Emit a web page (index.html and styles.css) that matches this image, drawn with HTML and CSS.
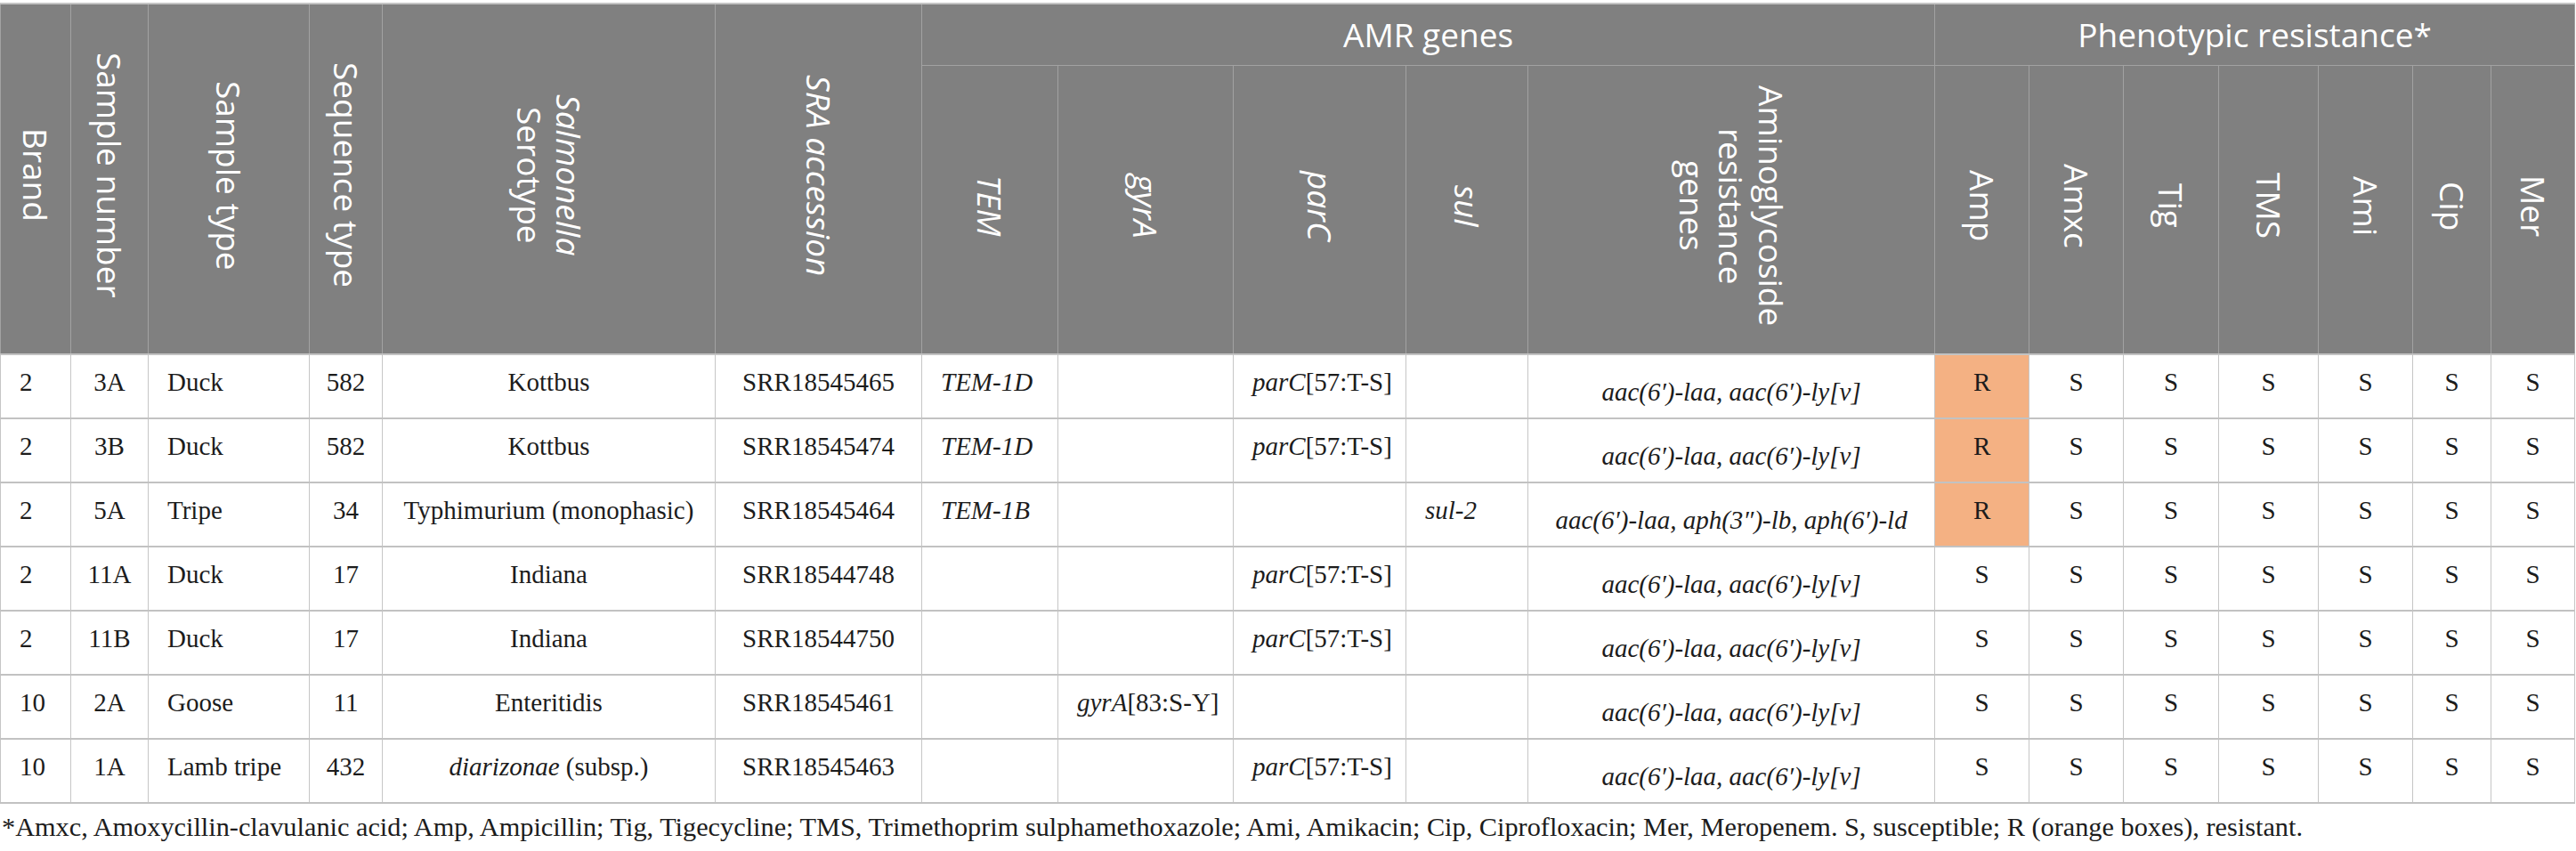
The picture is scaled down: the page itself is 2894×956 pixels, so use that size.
FILE: index.html
```html
<!DOCTYPE html>
<html>
<head>
<meta charset="utf-8">
<link rel="stylesheet" href="styles.css">
</head>
<body>
<div class="wrap">
<table class="t">
<colgroup>
<col style="width:79px"><col style="width:87px"><col style="width:181px"><col style="width:82px"><col style="width:374px"><col style="width:232px"><col style="width:153px"><col style="width:197px"><col style="width:194px"><col style="width:137px"><col style="width:457px"><col style="width:106px"><col style="width:106px"><col style="width:107px"><col style="width:112px"><col style="width:106px"><col style="width:88px"><col style="width:94px">
</colgroup>
<thead>
<tr class="grp">
<th rowspan="2"><span class="vt">Brand</span></th>
<th rowspan="2"><span class="vt">Sample number</span></th>
<th rowspan="2"><span class="vt">Sample type</span></th>
<th rowspan="2"><span class="vt">Sequence type</span></th>
<th rowspan="2"><span class="vt"><i>Salmonella</i><br>Serotype</span></th>
<th rowspan="2"><span class="vt"><i>SRA accession</i></span></th>
<th colspan="5" class="gh">AMR genes</th>
<th colspan="7" class="gh">Phenotypic resistance*</th>
</tr>
<tr class="sub">
<th><span class="vt"><i>TEM</i></span></th>
<th><span class="vt"><i>gyrA</i></span></th>
<th><span class="vt"><i>parC</i></span></th>
<th><span class="vt"><i>sul</i></span></th>
<th><span class="vt">Aminoglycoside<br>resistance<br>genes</span></th>
<th><span class="vt">Amp</span></th>
<th><span class="vt">Amxc</span></th>
<th><span class="vt">Tig</span></th>
<th><span class="vt">TMS</span></th>
<th><span class="vt">Ami</span></th>
<th><span class="vt">Cip</span></th>
<th><span class="vt">Mer</span></th>
</tr>
</thead>
<tbody>
<tr>
<td>2</td><td class="c">3A</td><td>Duck</td><td class="c">582</td><td class="c">Kottbus</td><td class="c">SRR18545465</td>
<td><i>TEM-1D</i></td><td></td><td><i>parC</i>[57:T-S]</td><td></td><td class="c am"><i>aac(6′)-laa, aac(6′)-ly[v]</i></td>
<td class="c r">R</td><td class="c">S</td><td class="c">S</td><td class="c">S</td><td class="c">S</td><td class="c">S</td><td class="c">S</td>
</tr>
<tr>
<td>2</td><td class="c">3B</td><td>Duck</td><td class="c">582</td><td class="c">Kottbus</td><td class="c">SRR18545474</td>
<td><i>TEM-1D</i></td><td></td><td><i>parC</i>[57:T-S]</td><td></td><td class="c am"><i>aac(6′)-laa, aac(6′)-ly[v]</i></td>
<td class="c r">R</td><td class="c">S</td><td class="c">S</td><td class="c">S</td><td class="c">S</td><td class="c">S</td><td class="c">S</td>
</tr>
<tr>
<td>2</td><td class="c">5A</td><td>Tripe</td><td class="c">34</td><td class="c">Typhimurium (monophasic)</td><td class="c">SRR18545464</td>
<td><i>TEM-1B</i></td><td></td><td></td><td><i>sul-2</i></td><td class="c am"><i>aac(6′)-laa, aph(3″)-lb, aph(6′)-ld</i></td>
<td class="c r">R</td><td class="c">S</td><td class="c">S</td><td class="c">S</td><td class="c">S</td><td class="c">S</td><td class="c">S</td>
</tr>
<tr>
<td>2</td><td class="c">11A</td><td>Duck</td><td class="c">17</td><td class="c">Indiana</td><td class="c">SRR18544748</td>
<td></td><td></td><td><i>parC</i>[57:T-S]</td><td></td><td class="c am"><i>aac(6′)-laa, aac(6′)-ly[v]</i></td>
<td class="c">S</td><td class="c">S</td><td class="c">S</td><td class="c">S</td><td class="c">S</td><td class="c">S</td><td class="c">S</td>
</tr>
<tr>
<td>2</td><td class="c">11B</td><td>Duck</td><td class="c">17</td><td class="c">Indiana</td><td class="c">SRR18544750</td>
<td></td><td></td><td><i>parC</i>[57:T-S]</td><td></td><td class="c am"><i>aac(6′)-laa, aac(6′)-ly[v]</i></td>
<td class="c">S</td><td class="c">S</td><td class="c">S</td><td class="c">S</td><td class="c">S</td><td class="c">S</td><td class="c">S</td>
</tr>
<tr>
<td>10</td><td class="c">2A</td><td>Goose</td><td class="c">11</td><td class="c">Enteritidis</td><td class="c">SRR18545461</td>
<td></td><td><i>gyrA</i>[83:S-Y]</td><td></td><td></td><td class="c am"><i>aac(6′)-laa, aac(6′)-ly[v]</i></td>
<td class="c">S</td><td class="c">S</td><td class="c">S</td><td class="c">S</td><td class="c">S</td><td class="c">S</td><td class="c">S</td>
</tr>
<tr>
<td>10</td><td class="c">1A</td><td>Lamb tripe</td><td class="c">432</td><td class="c"><i>diarizonae</i> (subsp.)</td><td class="c">SRR18545463</td>
<td></td><td></td><td><i>parC</i>[57:T-S]</td><td></td><td class="c am"><i>aac(6′)-laa, aac(6′)-ly[v]</i></td>
<td class="c">S</td><td class="c">S</td><td class="c">S</td><td class="c">S</td><td class="c">S</td><td class="c">S</td><td class="c">S</td>
</tr>
</tbody>
</table>
<p class="note">*Amxc, Amoxycillin-clavulanic acid; Amp, Ampicillin; Tig, Tigecycline; TMS, Trimethoprim sulphamethoxazole; Ami, Amikacin; Cip, Ciprofloxacin; Mer, Meropenem. S, susceptible; R (orange boxes), resistant.</p>
</div>
</body>
</html>
```

FILE: styles.css
```css
html, body {
  margin: 0;
  padding: 0;
  background: #ffffff;
}

.wrap {
  padding-top: 3px;
}

.t {
  border-collapse: collapse;
  table-layout: fixed;
  width: 2893px;
  font-family: "Liberation Serif", "Times New Roman", serif;
  font-size: 29px;
  color: #1c1c1c;
}

.t th {
  background: #808080;
  color: #ffffff;
  font-family: "Open Sans", "DejaVu Sans", sans-serif;
  font-weight: 400;
  font-size: 37px;
  border: 1px solid #a2a2a2;
  padding: 0;
  text-align: center;
  vertical-align: middle;
  line-height: 1.2;
}

.t .grp th {
  height: 68px;
}

.t .grp th.gh {
  border-top: 2px solid #c4c4c4;
}

.t .grp th[rowspan] {
  border-top: 2px solid #c4c4c4;
}

.t .sub th {
  height: 323px;
}

.vt {
  display: inline-block;
  writing-mode: vertical-rl;
  text-align: center;
  line-height: 1.2;
}

.t tbody tr {
  height: 72px;
}

.t td {
  border-left: 1px solid #c6c6c6;
  border-right: 1px solid #c6c6c6;
  border-top: 2px solid #c2c2c2;
  border-bottom: 2px solid #c2c2c2;
  padding: 14px 4px 0 21px;
  line-height: 32px;
  vertical-align: top;
  text-align: left;
  white-space: nowrap;
}

.t td.c {
  text-align: center;
  padding-left: 4px;
}

.t td.am {
  padding-top: 25px;
}

.t td.r {
  background: #f4b183;
}

.note {
  margin: 9px 0 0 2px;
  font-family: "Liberation Serif", "Times New Roman", serif;
  font-size: 30.3px;
  color: #1c1c1c;
}
```
